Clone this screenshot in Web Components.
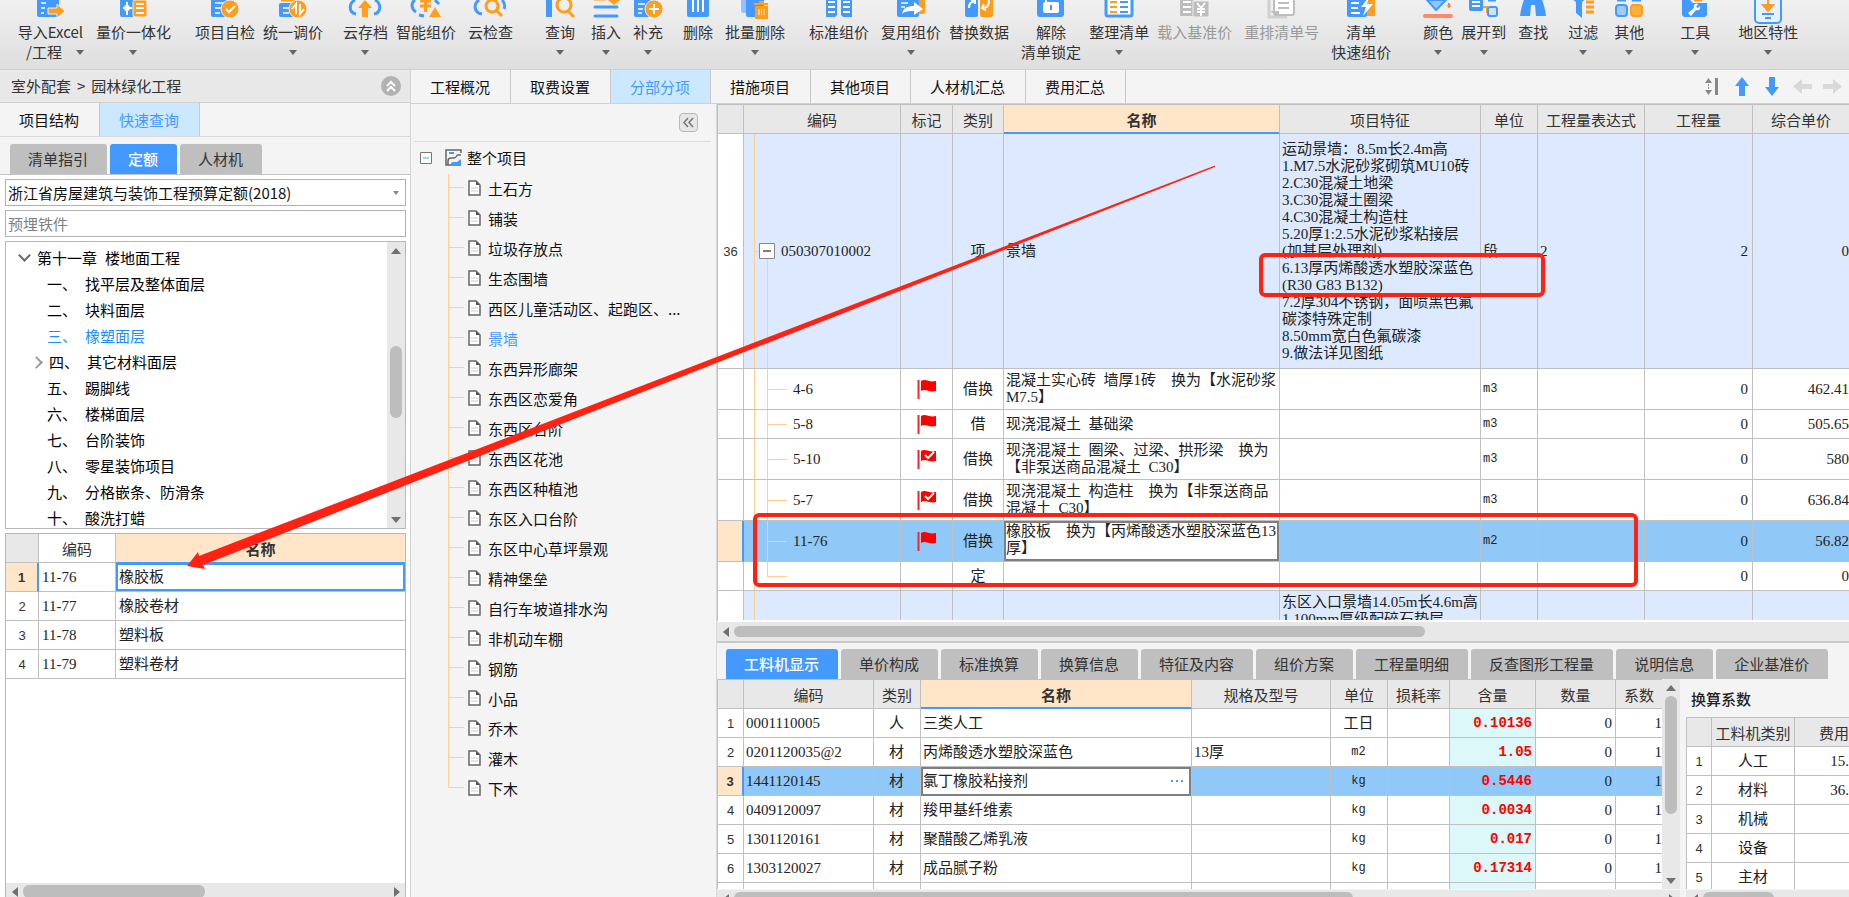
<!DOCTYPE html>
<html lang="zh-CN">
<head>
<meta charset="utf-8">
<title>工程计价</title>
<style>
  html, body { margin: 0; height: 100%; }
  body {
    overflow: hidden;
    background: #f4f4f4;
    color: #222;
    font: 15px/20px "Noto Sans CJK SC", "Noto Sans", sans-serif;
  }
</style>
</head>
<body>
<costing-app></costing-app>
<script>
function define(name, css, html, setup) {
  const template = document.createElement('template');
  customElements.define(name, class extends HTMLElement {
    connectedCallback() {
      if (this.shadowRoot) return;
      const root = this.attachShadow({ mode: 'open' });
      template.innerHTML = '<style>*{box-sizing:border-box}' + css + '</style>' +
        (typeof html === 'function' ? html(this) : html);
      root.append(template.content.cloneNode(true));
      if (setup) setup(this, root);
    }
  });
}

const BUTTON_RESET = 'button{font:inherit;color:inherit;border:0;margin:0;padding:0;background:none;cursor:pointer}';

/* ---------- ribbon icons: 32x18, cut by the window's top edge ---------- */
const B = '#4499ff', O = '#ff9d1e', G = '#bdbdbd';
const ICONS = {
  import: `<rect x="3" y="-6" width="22" height="23" rx="2" fill="${B}"/><path d="M7 3h5M7 8h4M7 13h3" stroke="#cfe5ff" stroke-width="2"/><path d="M14 8h9V4l8 7-8 7v-4h-9z" fill="${O}" stroke="#eee"/>`,
  integrate: `<rect x="3" y="-6" width="14" height="23" rx="2" fill="${B}"/><path d="M6 8h9M10 2v13" stroke="#fff" stroke-width="2"/><circle cx="10" cy="8" r="3" fill="#fff"/><rect x="16" y="0" width="14" height="17" rx="2" fill="${O}" stroke="#eee"/><path d="M19 4h8M19 8h8M19 13h8" stroke="#fff" stroke-width="2"/>`,
  check: `<rect x="2" y="-6" width="23" height="23" rx="2" fill="${B}"/><path d="M6 3h9M6 8h6M6 13h5" stroke="#cfe5ff" stroke-width="2"/><circle cx="21" cy="9" r="9" fill="${O}" stroke="#eee"/><path d="M17 9l3 3 6-6" fill="none" stroke="#fff" stroke-width="2"/>`,
  adjust: `<rect x="2" y="3" width="16" height="14" rx="2" fill="${B}"/><path d="M6 8h6M6 13h6" stroke="#cfe5ff" stroke-width="2"/><path d="M4 0h14" stroke="${O}" stroke-width="3"/><circle cx="21" cy="9" r="9" fill="${O}" stroke="#eee"/><path d="M19 14V4l-4 5M23 4v10l4-5" fill="none" stroke="#fff" stroke-width="2"/>`,
  cloud: `<path d="M7 14C-1 12 0 3 6 0M25 14c8-2 7-11 1-14" fill="none" stroke="${B}" stroke-width="3"/><path d="M16 0l7 8h-4v9h-6V8H9z" fill="${O}"/>`,
  smart: `<path d="M5 0C0 3 2 10 6 12M9 15l5 1" fill="none" stroke="${B}" stroke-width="3"/><path d="M10 1h11M10 6h11M15.500 0v12" stroke="${O}" stroke-width="3"/><path d="M19 17l6-10 6 10z" fill="${O}"/><path d="M25 0l4 4" stroke="${B}" stroke-width="3"/>`,
  cloudcheck: `<path d="M8 14C0 13-1 4 5 0M28 0c3 3 3 7 2 9" fill="none" stroke="${B}" stroke-width="3"/><circle cx="18" cy="6" r="6" fill="none" stroke="${O}" stroke-width="3"/><path d="M22 10l6 6" stroke="${O}" stroke-width="3"/>`,
  query: `<path d="M5 -4v21" stroke="${B}" stroke-width="6"/><circle cx="20" cy="5" r="7" fill="none" stroke="${O}" stroke-width="3"/><path d="M24 11l6 6" stroke="${O}" stroke-width="3"/>`,
  insert: `<path d="M4 -1h12M19 -1l5 4 5-4" stroke="${O}" stroke-width="3" fill="${O}"/><path d="M5 7h22M5 16h22" stroke="${B}" stroke-width="3" stroke-linecap="round"/>`,
  add: `<rect x="2" y="-6" width="22" height="23" rx="2" fill="${B}"/><path d="M6 4h7M6 9h5M6 13h4" stroke="#cfe5ff" stroke-width="2"/><circle cx="22" cy="9" r="9" fill="${O}" stroke="#eee"/><path d="M17 9h10M22 4v10" stroke="#fff" stroke-width="2"/>`,
  remove: `<rect x="5" y="-6" width="22" height="23" rx="2" fill="${B}"/><path d="M11 -2v14M16 -2v14M21 -2v14" stroke="#fff" stroke-width="2"/>`,
  batch: `<rect x="2" y="-6" width="18" height="19" rx="2" fill="#8fc4ff"/><rect x="7" y="-2" width="18" height="19" rx="2" fill="${B}"/><path d="M15 4h14M17 7h11v11H17zM20 2h5" fill="${O}" stroke="${O}" stroke-width="2"/><path d="M20 9v6M22.500 9v6M25 9v6" stroke="#fff"/>`,
  standard: `<path d="M3 -6h11v21l-2 2H3zM18 -6h11v23h-9l-2-2z" fill="${B}"/><path d="M5 2h7M5 7h7M5 12h7M20 2h7M20 7h7M20 12h7" stroke="#fff" stroke-width="2"/>`,
  reuse: `<rect x="14" y="-6" width="16" height="20" rx="2" fill="${O}"/><rect x="2" y="-6" width="22" height="23" rx="2" fill="${B}"/><path d="M6 3h7M6 7h4" stroke="#cfe5ff" stroke-width="2"/><path d="M7 14c1-6 5-8 12-8V2l9 7-9 6v-4c-5 0-9 0-12 3z" fill="#fff"/>`,
  replace: `<rect x="2" y="-6" width="13" height="23" rx="2" fill="${B}"/><rect x="17" y="-6" width="13" height="23" rx="2" fill="${O}"/><path d="M6 8c0-5 2-6 6-7M26 0c0 6-2 8-6 8M8 0h4v4M21 4l-2 4 4 2" fill="none" stroke="#fff" stroke-width="2"/>`,
  unlock: `<rect x="2" y="-6" width="27" height="23" rx="3" fill="${B}"/><rect x="8" y="2" width="16" height="11" rx="2" fill="#fff"/><path d="M11 2v-4" stroke="#fff" stroke-width="2"/><path d="M16 5v5" stroke="${B}" stroke-width="2"/>`,
  arrange: `<rect x="3" y="-6" width="26" height="22" rx="2" fill="#fff" stroke="${B}" stroke-width="3"/><path d="M7 2h7M7 7h7M7 12h7" stroke="${O}" stroke-width="2"/><path d="M17 2h8M17 7h8M17 12h8" stroke="${B}" stroke-width="2"/>`,
  load: `<rect x="1" y="-6" width="14" height="22" rx="1" fill="${G}"/><path d="M4 2h8M4 7h8M4 12h8" stroke="#fff" stroke-width="2"/><rect x="14" y="1" width="16" height="16" fill="${G}" stroke="#eee"/><path d="M18 3l4 5 4-5M18 9h8M18 12h8M22 8v8" fill="none" stroke="#fff" stroke-width="2"/>`,
  reorder: `<path d="M3 -6v23h18" fill="none" stroke="#d0d0d0" stroke-width="3"/><rect x="8" y="-6" width="20" height="21" rx="2" fill="#fff" stroke="${G}" stroke-width="2"/><path d="M12 3h11M12 8h11" stroke="${G}" stroke-width="2"/><path d="M4 11h9v6z" fill="${G}"/>`,
  quick: `<path d="M18 -4h12v20h-8z" fill="${O}"/><rect x="2" y="-6" width="20" height="23" rx="2" fill="${B}"/><path d="M6 3h8M6 8h7M6 13h9" stroke="#fff" stroke-width="2"/><path d="M24 -3l-8 10h5l-3 9 10-12h-6z" fill="#fff"/>`,
  color: `<path d="M5 0h19L14 10z" fill="#8fc8ff" stroke="${B}" stroke-width="2"/><path d="M27 3c4 6-4 6 0 0z" fill="#ff7a50" stroke="#ff7a50"/><path d="M3 16h26" stroke="#ff8a65" stroke-width="4" stroke-linecap="round"/>`,
  expand: `<rect x="1" y="-6" width="14" height="17" rx="2" fill="${B}"/><path d="M4 2h8M4 6h8" stroke="#fff" stroke-width="2"/><path d="M15 7h4v5h3" fill="none" stroke="${O}" stroke-width="2"/><rect x="20" y="7" width="9" height="9" rx="2" fill="#cfe5ff" stroke="${B}" stroke-width="2"/><path d="M20 0h8" stroke="${B}" stroke-width="3"/>`,
  find: `<path d="M8 -3h6v8l-1 11H3C4 8 6 2 8-3zM18 -3h6c2 5 4 11 5 19H19L18 5zM13 0h6v5h-6z" fill="${B}"/>`,
  filter: `<path d="M2 -3h19l-6 5v16l-6-5V2z" fill="${B}"/><path d="M19 2h8M19 7h8M19 12h8" stroke="${O}" stroke-width="3"/>`,
  other: `<path d="M4 0h9M19 0h9" stroke="${B}" stroke-width="3"/><rect x="3" y="5" width="11" height="11" rx="3" fill="#9ccbff" stroke="${B}" stroke-width="2"/><rect x="18" y="5" width="11" height="11" rx="3" fill="#ffae42" stroke="${O}" stroke-width="2"/>`,
  tool: `<path d="M3 0h8l3 3h14v12l-2 2H5l-2-2z" fill="${B}"/><path d="M15 0h8" stroke="${O}" stroke-width="3"/><path d="M9 13l6-5c-1-4 2-5 4-4l-2 3 2 1 2-2c1 4-2 5-4 4l-5 6z" fill="#fff"/>`,
  region: `<rect x="3" y="-8" width="26" height="31" rx="4" fill="#e6f2ff" stroke="${B}" stroke-width="2"/><path d="M16 -2v10M11 5l5 6 5-6z" fill="${O}" stroke="${O}" stroke-width="2"/><path d="M10 14h12M13 18h6" stroke="${B}" stroke-width="2"/>`
};

define('tool-button', BUTTON_RESET + `
  :host { display: block; flex: none; color: #333; }
  :host([off]) { color: #9a9a9a; }
  button { display: grid; justify-items: center; grid-template-rows: 18px 24px 20px; white-space: nowrap; line-height: 20px; align-items: end; }
  svg { overflow: visible; display: block; margin: 0 -8px; }
  .under { display: flex; gap: 14px; align-items: center; height: 20px; }
  .both { padding-left: 9px; }
  .under i { border: 4px solid transparent; border-top: 5px solid #666; border-bottom: 0; }
  .word:empty { display: none; }`,
  el => `<button ${el.hasAttribute('off') ? 'disabled style="cursor:default"' : ''}>
    <svg width="32" height="18" viewBox="0 0 32 18">${ICONS[el.getAttribute('icon')]}</svg>
    <span><slot></slot></span>
    <span class="under ${el.getAttribute('second') && el.hasAttribute('menu') ? 'both' : ''}"><span class="word">${el.getAttribute('second') || ''}</span>${el.hasAttribute('menu') ? '<i></i>' : ''}</span>
  </button>`);

/* gap before the button, label, icon, flags, second line */
const TOOLS = [
  [0, '导入Excel', 'import', 'menu', '/工程'], [12, '量价一体化', 'integrate', 'menu'],
  [24, '项目自检', 'check'], [8, '统一调价', 'adjust', 'menu'],
  [20, '云存档', 'cloud', 'menu'], [8, '智能组价', 'smart'], [12, '云检查', 'cloudcheck'],
  [32, '查询', 'query', 'menu'], [16, '插入', 'insert', 'menu'], [12, '补充', 'add', 'menu'],
  [20, '删除', 'remove'], [12, '批量删除', 'batch', 'menu'],
  [24, '标准组价', 'standard'], [12, '复用组价', 'reuse', 'menu'], [8, '替换数据', 'replace'],
  [12, '解除', 'unlock', '', '清单锁定'], [8, '整理清单', 'arrange', 'menu'],
  [8, '载入基准价', 'load', 'off'], [12, '重排清单号', 'reorder', 'off'],
  [12, '清单', 'quick', '', '快速组价'],
  [32, '颜色', 'color', 'menu'], [8, '展开到', 'expand', 'menu'], [12, '查找', 'find'],
  [20, '过滤', 'filter', 'menu'], [16, '其他', 'other', 'menu'],
  [36, '工具', 'tool', 'menu'], [28, '地区特性', 'region', 'menu']
];
define('ribbon-bar', `
  :host { display: block; height: 70px; overflow: hidden; background: linear-gradient(#f0f0f0, #dedede); border-bottom: 1px solid #d0d0d0; }
  nav { display: flex; padding-left: 17px; }`,
  '<nav>' + TOOLS.map(([gap, label, icon, flags = '', second = '']) =>
    `<tool-button icon="${icon}" ${flags} second="${second}" style="margin-left:${gap}px">${label}</tool-button>`).join('') + '</nav>');

/* ---------- tabs ---------- */
define('flat-tab', BUTTON_RESET + `
  :host { display: block; flex: none; border-right: 1px solid #c8c8c8; }
  button { height: 100%; padding: 0 20px 0 19px; color: #111; white-space: nowrap; }
  :host([on]) { background: #cce8ff; }
  :host([on]) button { color: #4499ff; }`, '<button><slot></slot></button>');
define('block-tab', BUTTON_RESET + `
  :host { display: block; flex: none; height: 30px; background: #bfbfbf; border-radius: 3px 3px 0 0; }
  button { height: 100%; padding: 0 19px 0 18px; color: #333; white-space: nowrap; }
  :host([on]) { background: #4499ff; }
  :host([on]) button { color: #fff; font-weight: 500; }`, '<button><slot></slot></button>');

/* ---------- scrollbars: from / size / rest are shares of the track ---------- */
define('scroll-bar', BUTTON_RESET + `
  :host { display: flex; flex: none; background: #e8e8e8; height: 17px; }
  :host([vertical]) { flex-direction: column; width: 18px; height: auto; }
  button { flex: none; width: 17px; height: 17px; display: grid; place-items: center; align-self: center; }
  i { border-radius: 6px; background: #bdbdbd; margin: 2px 0; }
  :host([vertical]) i { margin: 0 3px; }`,
  el => {
    const v = el.hasAttribute('vertical');
    const [a, b, c] = el.getAttribute('track').split(' ');
    const tri = d => `<svg width="10" height="10" viewBox="0 0 10 10"><path d="${d}" fill="#707070"/></svg>`;
    return `<button aria-label="后退">${tri(v ? 'M0 8h10L5 2z' : 'M8 0v10L2 5z')}</button>
      <span style="flex:${a}"></span><i style="flex:${b}"></i><span style="flex:${c}"></span>` +
      (el.hasAttribute('open-end') ? '' : `<button aria-label="前进">${tri(v ? 'M0 2h10L5 8z' : 'M2 0v10l6-5z')}</button>`);
  });

/* ---------- left panel ---------- */
const CHAPTERS = [['一、', '找平层及整体面层'], ['二、', '块料面层'], ['三、', '橡塑面层'], ['四、', '其它材料面层'],
  ['五、', '踢脚线'], ['六、', '楼梯面层'], ['七、', '台阶装饰'], ['八、', '零星装饰项目'],
  ['九、', '分格嵌条、防滑条'], ['十、', '酸洗打蜡']];
define('chapter-tree', `
  :host { display: flex; border: 1px solid #b8b8b8; background: #fff; color: #000; overflow: hidden; }
  ul { flex: 1; list-style: none; margin: 0; padding: 3px 0 0; overflow: hidden; }
  li { display: flex; gap: 8px; align-items: center; height: 26px; padding-left: 27px; white-space: nowrap; }
  li::before { content: ""; flex: none; width: 6px; height: 6px; }
  li.top { padding-left: 15px; }
  li.top::before, li.more::before { width: 7px; height: 7px; margin-left: -1px; border: solid #999; border-width: 0 2px 2px 0; transform: rotate(-45deg); }
  li.top::before { border-color: #666; transform: rotate(45deg); margin-top: -6px; }
  li.on { color: #1a90ff; }`,
  `<ul><li class="top"><span>第十一章</span><span>楼地面工程</span></li>` +
  CHAPTERS.map(([n, t], i) => `<li class="${i === 2 ? 'on' : i === 3 ? 'more' : ''}"><span>${n}</span><span>${t}</span></li>`).join('') +
  `</ul><scroll-bar vertical track="86 71 92"></scroll-bar>`);

const TABLE_CSS = `
  table { border-collapse: separate; border-spacing: 0; table-layout: fixed; width: 100%; background: #fff; }
  th, td { border: solid #c0c0c0; border-width: 0 1px 1px 0; padding: 0 3px; height: 29px; overflow: hidden; white-space: nowrap; font-weight: 400; text-align: left; line-height: 17px; }
  td { font-family: "Liberation Serif", "Noto Sans CJK SC", serif; }
  th { background: #e8e8e8; color: #333; text-align: center; padding: 0; }
  th.key { background: #ffe6c9; font-weight: 700; box-shadow: inset 0 -1px #4499ff; border-bottom-color: #4499ff; }
  .n { background: #fff; color: #333; text-align: center; padding: 0; font: 13px/17px "Liberation Sans", sans-serif; }
  .now { background: #ffe6c9; font-weight: 700; border-right: 2px solid #4499ff; }
  .c { text-align: center; } .r { text-align: right; }
  .u { font: 12px/17px "Liberation Mono", monospace; }
  .edge { padding-right: 0; border-right: 0; }`;

define('quota-table', TABLE_CSS + `
  :host { display: flex; flex-direction: column; border: 1px solid #b8b8b8; border-bottom: 0; background: #fff; overflow: hidden; }
  .space { flex: 1; overflow: hidden; }
  th.plain { background: #fff; }
  .pick { box-shadow: inset 0 0 0 2px #4499ff; }
  th.key { box-shadow: none; }
  td:last-child, th:last-child { border-right: 0; }`,
  `<div class="space"><table><colgroup><col style="width:33px"><col style="width:77px"><col></colgroup>
   <thead><tr><th></th><th class="plain">编码</th><th class="key">名称</th></tr></thead><tbody>` +
  ['橡胶板', '橡胶卷材', '塑料板', '塑料卷材'].map((t, i) =>
    `<tr><td class="n ${i ? '' : 'now'}">${i + 1}</td><td>11-7${i + 6}</td><td class="${i ? '' : 'pick'}">${t}</td></tr>`).join('') +
  `</tbody></table></div><scroll-bar track="0 181 182"></scroll-bar>`);

define('lookup-panel', BUTTON_RESET + `
  :host { display: flex; flex-direction: column; background: #fff; border-right: 1px solid #d4d4d4; min-height: 0; }
  header { display: flex; align-items: center; justify-content: space-between; height: 33px; padding: 0 9px 0 11px; background: #e8e8e8; border-bottom: 1px solid #d0d0d0; color: #333; flex: none; }
  header span { display: flex; gap: 6px; }
  header svg { display: block; }
  .flat { display: flex; height: 34px; background: #f4f4f4; border-bottom: 1px solid #d8d8d8; flex: none; }
  .kinds { display: flex; gap: 3px; padding: 7px 0 0 10px; background: #f4f4f4; border-bottom: 1px solid #c4c4c4; flex: none; }
  .body { flex: 1; display: flex; flex-direction: column; gap: 4px; padding: 4px 4px 0 5px; min-height: 0; margin-bottom: -3px; }
  select, input { font: inherit; width: 100%; height: 27px; border: 1px solid #b0b0b0; border-radius: 0; background: #fff; padding: 0 2px; margin: 0; color: #111; flex: none; appearance: none; }
  .pick { position: relative; height: 27px; flex: none; }
  .pick i { position: absolute; right: 7px; top: 12px; border: 3px solid transparent; border-top: 4px solid #888; border-bottom: 0; pointer-events: none; }
  input::placeholder { color: #808080; opacity: 1; }
  chapter-tree { height: 288px; flex: none; }
  quota-table { flex: 1; min-height: 0; }`,
  `<header><span><span>室外配套</span><span>&gt;</span><span>园林绿化工程</span></span>
     <button aria-label="收起"><svg width="20" height="20" viewBox="0 0 20 20"><circle cx="10" cy="10" r="10" fill="#b2b2b2"/><path d="M6 10l4-4 4 4M6 15l4-4 4 4" fill="none" stroke="#fff" stroke-width="2"/></svg></button></header>
   <div class="flat"><flat-tab>项目结构</flat-tab><flat-tab on>快速查询</flat-tab></div>
   <div class="kinds"><block-tab>清单指引</block-tab><block-tab on>定额</block-tab><block-tab>人材机</block-tab></div>
   <div class="body">
     <div class="pick"><select aria-label="定额库"><option>浙江省房屋建筑与装饰工程预算定额(2018)</option></select><i></i></div>
     <input aria-label="搜索" placeholder="预埋铁件">
     <chapter-tree></chapter-tree>
     <quota-table></quota-table>
   </div>`);

/* ---------- project tree ---------- */
const PARTS = ['土石方', '铺装', '垃圾存放点', '生态围墙', '西区儿童活动区、起跑区、...', '景墙', '东西异形廊架', '东西区恋爱角',
  '东西区台阶', '东西区花池', '东西区种植池', '东区入口台阶', '东区中心草坪景观', '精神堡垒', '自行车坡道排水沟', '非机动车棚',
  '钢筋', '小品', '乔木', '灌木', '下木'];
define('project-tree', BUTTON_RESET + `
  :host { display: block; color: #111; overflow: hidden; }
  .bar { display: flex; justify-content: flex-end; align-items: center; height: 38px; margin: 0 5px 0 3px; padding-right: 13px; border-bottom: 1px solid #dcdcdc; }
  .bar button { width: 19px; height: 19px; border: 1px solid #b8b8b8; border-radius: 4px; background: #e6e6e6; display: grid; place-items: center; }
  .root { display: flex; align-items: center; height: 32px; padding-left: 9px; }
  .root svg:first-child { margin-right: 13px; } .root svg { margin-right: 5px; }
  ul { list-style: none; margin: 0; padding: 0 0 0 37px; }
  li { display: flex; align-items: center; height: 30px; white-space: nowrap;
    background: linear-gradient(#ffcf90, #ffcf90) 0 0 / 1px 100% no-repeat, linear-gradient(#ffcf90, #ffcf90) 0 13px / 16px 1px no-repeat; padding-left: 20px; gap: 7px; }
  li:last-child { background-size: 1px 14px, 16px 1px; }
  li svg { margin-top: -3px; }
  li.on { color: #4499ff; }`,
  `<div class="bar"><button aria-label="折叠"><svg width="13" height="11" viewBox="0 0 13 11"><path d="M6 1L2 5.500 6 10M11 1L7 5.500 11 10" fill="none" stroke="#777" stroke-width="1.500"/></svg></button></div>
   <div class="root"><svg width="12" height="12" viewBox="0 0 12 12"><path d="M.5.5h11v11H.5z" fill="#fff" stroke="#777"/><path d="M3 6h6" stroke="#3ab0c8"/></svg>
   <svg width="17" height="18" viewBox="0 0 17 18"><path d="M16 4V1H1v15h5" fill="none" stroke="#666" stroke-width="1.500"/><path d="M4 4h5" stroke="${B}" stroke-width="2"/><path d="M3 16V12c0-2 1-3 3-3h3c3 0 2-3 4-3h3" fill="none" stroke="#666" stroke-width="1.500"/><path d="M6 17v-3l2-1h4l4-3v7z" fill="${B}"/></svg>整个项目</div><ul>` +
  PARTS.map(t => `<li class="${t === '景墙' ? 'on' : ''}"><svg width="13" height="16" viewBox="0 0 13 16"><path d="M1 1h7l4 4v10H1z" fill="#fff" stroke="#666" stroke-width="1.500"/><path d="M8 1v4h4z" fill="#555"/><path d="M3 8h7M3 11h7" stroke="#ccc"/></svg>${t}</li>`).join('') + '</ul>');

/* ---------- bill of quantities ---------- */
const flag = done => `<svg width="20" height="20" viewBox="0 0 20 20"><path d="M1.500 1v19" stroke="#f22" stroke-width="2"/><path d="M4 2c5-3 8 2 15 0v10c-7 2-10-3-15 0z" fill="#f00"/>${done ? '<path d="M8 6l3 3 6-6" fill="none" stroke="#fff" stroke-width="2"/>' : ''}</svg>`;
const CHILDREN = [
  ['4-6', 1, '借换', '混凝土实心砖&ensp;墙厚1砖&emsp;换为【水泥砂浆<br>M7.5】', 'm3', '462.41'],
  ['5-8', 1, '借', '现浇混凝土&ensp;基础梁', 'm3', '505.65', 'low'],
  ['5-10', 2, '借换', '现浇混凝土&ensp;圈梁、过梁、拱形梁&emsp;换为<br>【非泵送商品混凝土&ensp;C30】', 'm3', '580'],
  ['5-7', 2, '借换', '现浇混凝土&ensp;构造柱&emsp;换为【非泵送商品<br>混凝土&ensp;C30】', 'm3', '636.84'],
  ['11-76', 1, '借换', '', 'm2', '56.82', 'sel'],
  ['', 0, '定', '', '', '0', 'low last']
];
define('bill-table', TABLE_CSS + `
  :host { display: block; overflow: hidden; border-top: 1px solid #c0c0c0; border-left: 1px solid #c0c0c0; }
  td { height: 41px; padding: 0 2px; }
  .n { padding: 0; }
  tr.low td { height: 29px; }
  tr.item td:not(.n) { background-color: #dce9fe; }
  tr.item td { height: 235px; }
  tr.sel td:not(.n):not(.edit) { background-color: #90c8f7; }
  tr.next td { height: 60px; vertical-align: top; padding-top: 3px; }
  .code { padding-left: 49px; background: linear-gradient(#ffcf90, #ffcf90) 10px 0 / 1px 100% no-repeat, linear-gradient(#ffcf90, #ffcf90) 23px 0 / 1px 100% no-repeat, linear-gradient(#ffcf90, #ffcf90) 23px 50% / 20px 1px no-repeat; }
  .last .code { background-size: 1px 100%, 1px 50%, 20px 1px; }
  .item .code { padding-left: 15px; background-position: 10px 0, 23px 100%, 10px 50%; background-size: 1px 100%, 1px calc(50% - 8px), 5px 1px; }
  .next .code { background-size: 1px 100%, 0 0, 0 0; }
  .open { display: flex; align-items: center; gap: 6px; }
  svg { display: block; margin: 0 auto; }
  .open svg { margin: 0; }
  .r { padding-right: 4px; } td.edge { padding-right: 0; }
  .edit { padding: 0; }
  textarea { display: block; width: 100%; height: 40px; margin: 0; padding: 0; border: 2px solid #7f7f7f; border-radius: 0; resize: none; overflow: hidden; font: 15px/17px "Liberation Serif", "Noto Sans CJK SC", serif; color: #222; background: #fff; }`,
  `<table><colgroup><col style="width:26px"><col style="width:157px"><col style="width:52px"><col style="width:51px"><col style="width:276px"><col style="width:201px"><col style="width:57px"><col style="width:107px"><col style="width:108px"><col></colgroup>
   <thead><tr><th></th><th>编码</th><th>标记</th><th>类别</th><th class="key">名称</th><th>项目特征</th><th>单位</th><th>工程量表达式</th><th>工程量</th><th class="edge">综合单价</th></tr></thead>
   <tbody><tr class="item"><td class="n">36</td><td class="code"><span class="open"><svg width="16" height="16" viewBox="0 0 16 16"><path d="M.5.5h15v15H.5z" fill="#fff" stroke="#888"/><path d="M4 8h8" stroke="#555" stroke-width="1.500"/></svg>050307010002</span></td><td></td><td class="c">项</td><td>景墙</td>
   <td>运动景墙：8.5m长2.4m高<br>1.M7.5水泥砂浆砌筑MU10砖<br>2.C30混凝土地梁<br>3.C30混凝土圈梁<br>4.C30混凝土构造柱<br>5.20厚1:2.5水泥砂浆粘接层<br>(加基层处理剂)<br>6.13厚丙烯酸透水塑胶深蓝色<br>(R30 G83 B132)<br>7.2厚304不锈钢，面喷黑色氟<br>碳漆特殊定制<br>8.50mm宽白色氟碳漆<br>9.做法详见图纸</td>
   <td>段</td><td>2</td><td class="r">2</td><td class="r edge">0</td></tr>` +
  CHILDREN.map(([code, mark, kind, name, unit, price, cls = '']) =>
    `<tr class="${cls}"><td class="n ${cls === 'sel' ? 'now' : ''}"></td><td class="code">${code}</td><td>${mark ? flag(mark === 2) : ''}</td><td class="c">${kind}</td>` +
    (cls === 'sel' ? '<td class="edit"><textarea aria-label="名称">橡胶板\u3000换为【丙烯酸透水塑胶深蓝色13\n厚】</textarea></td>' : `<td>${name}</td>`) +
    `<td></td><td class="u">${unit}</td><td></td><td class="r">0</td><td class="r edge">${price}</td></tr>`).join('') +
  `<tr class="item next"><td class="n"></td><td class="code"></td><td></td><td></td><td></td><td>东区入口景墙14.05m长4.6m高<br>1.100mm厚级配碎石垫层</td><td></td><td></td><td></td><td class="edge"></td></tr></tbody></table>`);

/* ---------- resources of the selected item ---------- */
const RES = [['0001110005', '人', '三类人工', '', '工日', '0.10136'], ['0201120035@2', '材', '丙烯酸透水塑胶深蓝色', '13厚', 'm2', '1.05'],
  ['1441120145', '材', '氯丁橡胶粘接剂', '', 'kg', '0.5446'], ['0409120097', '材', '羧甲基纤维素', '', 'kg', '0.0034'],
  ['1301120161', '材', '聚醋酸乙烯乳液', '', 'kg', '0.017'], ['1303120027', '材', '成品腻子粉', '', 'kg', '0.17314'], null];
define('resource-table', TABLE_CSS + BUTTON_RESET + `
  :host { display: block; overflow: hidden; border-left: 1px solid #c0c0c0; border-top: 1px solid #c0c0c0; }
  td { padding-left: 2px; }
  .n { padding: 0; }
  .amt { background: #dcf8f8; color: #f00; font: 700 14px/17px "Liberation Mono", monospace; text-align: right; }
  .sel td:not(.n):not(.amt):not(.edit) { background: #90c8f7; }
  .sel .amt { background: #90c8f7; }
  .edit { padding: 0; border-bottom: 0; }
  .edit div { display: flex; height: 29px; border: 2px solid #7f7f7f; background: #fff; }
  input { flex: 1; min-width: 0; border: 0; padding: 0; margin: 0; font: inherit; color: #222; background: none; }
  .edit button { width: 24px; color: #4499ff; display: grid; place-items: center; }`,
  `<table><colgroup><col style="width:26px"><col style="width:130px"><col style="width:47px"><col style="width:271px"><col style="width:139px"><col style="width:57px"><col style="width:62px"><col style="width:86px"><col style="width:80px"><col></colgroup>
   <thead><tr><th></th><th>编码</th><th>类别</th><th class="key">名称</th><th>规格及型号</th><th>单位</th><th>损耗率</th><th>含量</th><th>数量</th><th class="edge">系数</th></tr></thead><tbody>` +
  RES.map((r, i) => {
    if (!r) return '<tr><td class="n"></td><td></td><td></td><td></td><td></td><td></td><td></td><td class="amt"></td><td></td><td class="edge"></td></tr>';
    const sel = i === 2;
    return `<tr class="${sel ? 'sel' : ''}"><td class="n ${sel ? 'now' : ''}">${i + 1}</td><td>${r[0]}</td><td class="c">${r[1]}</td>` +
      (sel ? `<td class="edit"><div><input aria-label="名称" value="${r[2]}"><button aria-label="更多"><svg width="12" height="3" viewBox="0 0 12 3"><path d="M0 0h2v2H0zM5 0h2v2H5zM10 0h2v2h-2z" fill="#4a9be0"/></svg></button></div></td>` : `<td>${r[2]}</td>`) +
      `<td>${r[3]}</td><td class="c ${i ? 'u' : ''}">${r[4]}</td><td></td><td class="amt">${r[5]}</td><td class="r">0</td><td class="r edge">1</td></tr>`;
  }).join('') + '</tbody></table>');

define('factor-table', TABLE_CSS + `
  :host { display: flex; flex-direction: column; overflow: hidden; }
  h2 { margin: 0; padding: 1px 0 0 5px; height: 38px; font: 500 15px/38px "Noto Sans CJK SC", sans-serif; color: #222; flex: none; }
  .view { flex: 1; overflow: hidden; border: solid #c0c0c0; border-width: 1px 0 0 1px; min-height: 0; }`,
  `<h2>换算系数</h2><div class="view"><table><colgroup><col style="width:25px"><col style="width:83px"><col></colgroup>
   <thead><tr><th></th><th>工料机类别</th><th class="edge r">费用</th></tr></thead><tbody>` +
  [['人工', '15.'], ['材料', '36.'], ['机械', ''], ['设备', ''], ['主材', '']].map(([a, b], i) =>
    `<tr><td class="n">${i + 1}</td><td class="c">${a}</td><td class="r edge">${b}</td></tr>`).join('') + '</tbody></table></div>');

define('detail-dock', `
  :host { display: flex; flex-direction: column; min-width: 0; overflow: hidden; }
  .tabs { display: flex; gap: 3px; padding: 8px 0 0 9px; flex: none; }
  .cols { display: grid; grid-template-columns: minmax(0, 1fr) 169px; flex: 1; min-height: 0; }
  .left, .right { display: flex; flex-direction: column; min-width: 0; gap: 1px; }
  .right { padding-left: 6px; }
  .row { display: flex; height: 210px; flex: none; }
  .row resource-table { flex: 1; min-width: 0; }
  factor-table { flex: none; height: 210px; }`,
  `<div class="tabs">` + ['工料机显示', '单价构成', '标准换算', '换算信息', '特征及内容', '组价方案', '工程量明细', '反查图形工程量', '说明信息', '企业基准价']
    .map((t, i) => `<block-tab ${i ? '' : 'on'}>${t}</block-tab>`).join('') +
  `</div><div class="cols"><div class="left"><div class="row"><resource-table></resource-table><scroll-bar vertical track="0 118 58"></scroll-bar></div><scroll-bar track="0 607 304"></scroll-bar></div>
   <div class="right"><factor-table></factor-table><scroll-bar open-end track="0 71 74"></scroll-bar></div></div>`);

/* ---------- red hand-drawn notes over the window ---------- */
define('note-layer', `
  :host { position: absolute; inset: 0; pointer-events: none; }
  svg { display: block; }`,
  `<svg width="1849" height="897" viewBox="0 0 1849 897"><path d="M1215 165.500L199 556l-1-4-11 14 18 3-2-4L1215 167z" fill="#ff2212"/>
   <rect x="1261" y="255" width="282" height="40" rx="4" fill="none" stroke="#ff2212" stroke-width="4"/>
   <rect x="755" y="515" width="881" height="70" rx="4" fill="none" stroke="#ff2212" stroke-width="4"/></svg>`);

/* ---------- window ---------- */
define('costing-app', BUTTON_RESET + `
  :host { display: flex; flex-direction: column; height: 100vh; position: relative; overflow: hidden; }
  ribbon-bar { flex: none; }
  main { flex: 1; display: grid; grid-template-columns: 411px minmax(0, 1fr); min-height: 0; }
  section { display: flex; flex-direction: column; min-width: 0; min-height: 0; }
  .tabs { display: flex; height: 34px; border-bottom: 1px solid #d0d0d0; flex: none; }
  .tabs nav { margin-left: auto; display: flex; padding-right: 2px; }
  .tabs button { width: 30px; display: grid; place-items: center; }
  .split { flex: 1; display: grid; grid-template-columns: 305px minmax(0, 1fr); min-height: 0; }
  .work { display: grid; grid-template-rows: minmax(0, 1fr) 19px 268px; margin-bottom: -12px; border-left: 1px solid #d8d8d8; min-height: 0; }
  .work > * { min-width: 0; }
  .sheet { border-bottom: 2px solid #fff; min-height: 0; }
  .work scroll-bar { height: 21px; padding: 2px 0; border-bottom: 2px solid #c8c8c8; }`,
  `<ribbon-bar></ribbon-bar><main><lookup-panel></lookup-panel><section>
   <div class="tabs">` + ['工程概况', '取费设置', '分部分项', '措施项目', '其他项目', '人材机汇总', '费用汇总'].map((t, i) => `<flat-tab ${i === 2 ? 'on' : ''}>${t}</flat-tab>`).join('') +
  `<nav><button aria-label="行高"><svg width="14" height="17" viewBox="0 0 14 17"><path d="M3.500 3v11" stroke="#999" stroke-dasharray="2 1"/><path d="M0 5h7L3.500 0zM0 12h7l-3.500 5z" fill="#888"/><path d="M11.500 0v17" stroke="#888" stroke-width="3"/></svg></button>
   <button aria-label="上移"><svg width="14" height="19" viewBox="0 0 14 19"><path d="M7 0l7 9h-4v10H4V9H0z" fill="${B}"/></svg></button>
   <button aria-label="下移"><svg width="14" height="19" viewBox="0 0 14 19"><path d="M7 19l7-9h-4V0H4v10H0z" fill="${B}"/></svg></button>
   <button aria-label="左移"><svg width="19" height="15" viewBox="0 0 19 15"><path d="M0 7.500L9 0v5h10v5H9v5z" fill="#d9d9d9"/></svg></button>
   <button aria-label="右移"><svg width="19" height="15" viewBox="0 0 19 15"><path d="M19 7.500L10 0v5H0v5h10v5z" fill="#d9d9d9"/></svg></button></nav></div>
   <div class="split"><project-tree></project-tree><div class="work"><bill-table class="sheet"></bill-table><scroll-bar open-end track="0 690 424"></scroll-bar><detail-dock></detail-dock></div></div>
   </section></main><note-layer></note-layer>`);
</script>
</body>
</html>
